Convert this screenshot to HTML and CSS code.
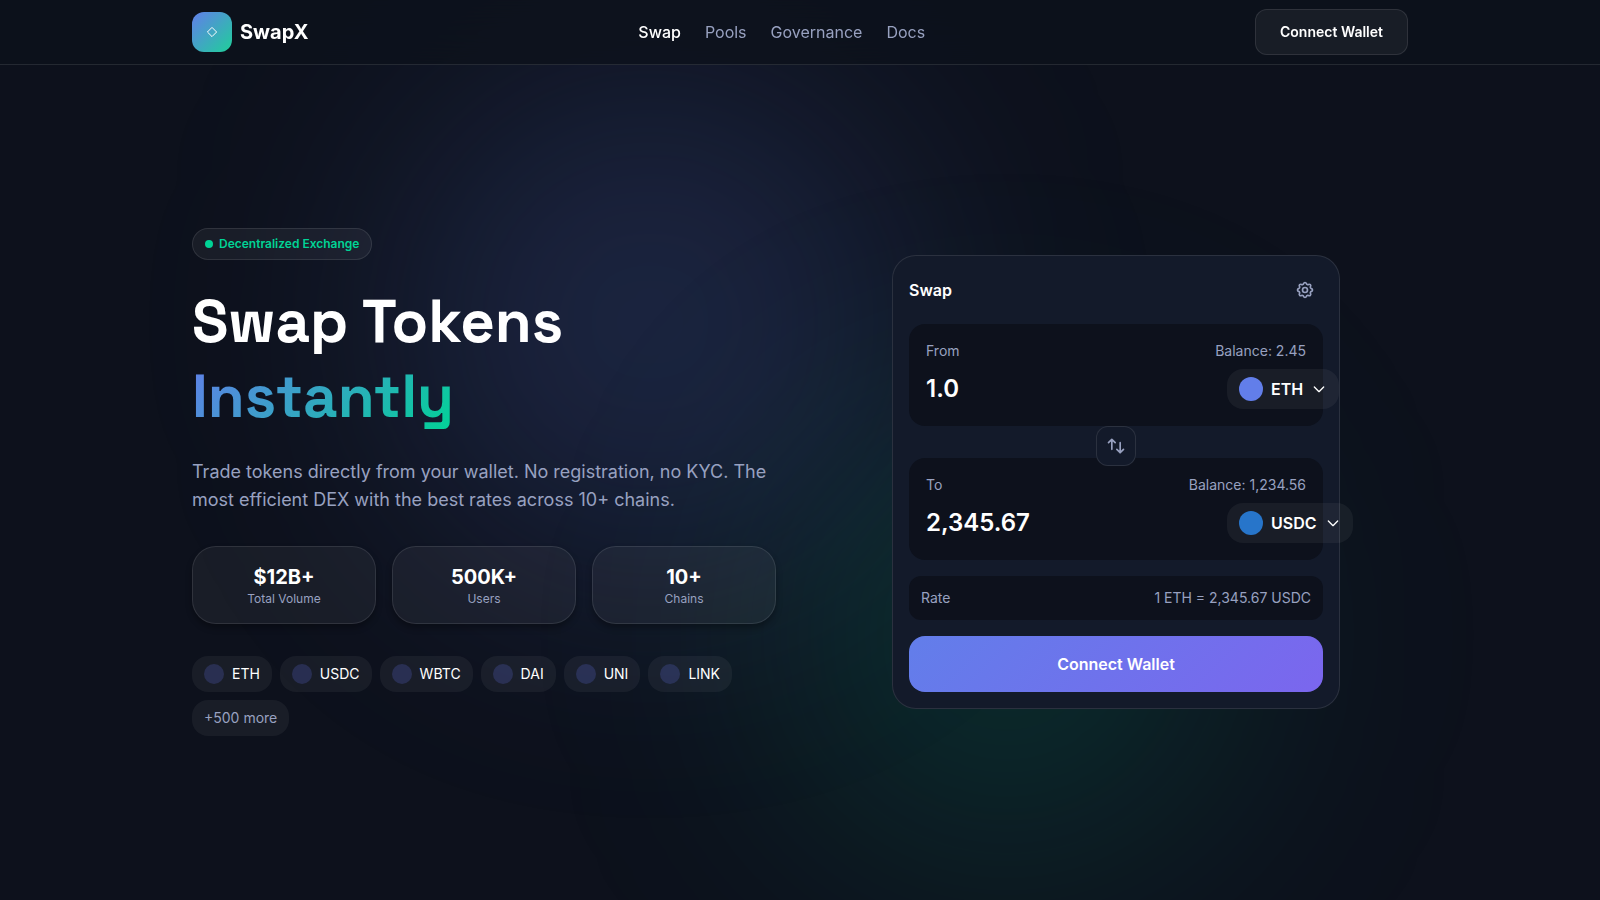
FILE: index.html
```html
<!DOCTYPE html>
<html lang="en">
<head>
<meta charset="utf-8">
<meta name="viewport" content="width=device-width, initial-scale=1">
<title>SwapX</title>
<link rel="stylesheet" href="styles.css">
</head>
<body>
<div class="glow glow-indigo"></div>
<div class="glow glow-green"></div>
<header class="header">
  <div class="container header-row">
    <div class="brand">
      <span class="logo"><svg width="12" height="12" viewBox="0 0 12 12" fill="none" stroke="currentColor" stroke-width="1"><path d="M6 1.4 10.6 6 6 10.6 1.4 6Z"/></svg></span>
      <span class="brand-name">SwapX</span>
    </div>
    <nav class="nav">
      <a class="active" href="#swap">Swap</a>
      <a href="#pools">Pools</a>
      <a href="#governance">Governance</a>
      <a href="#docs">Docs</a>
    </nav>
    <button class="btn-outline" type="button">Connect Wallet</button>
  </div>
</header>
<main class="hero">
  <div class="container hero-grid">
    <section class="intro">
      <div class="badge"><span class="badge-dot"></span>Decentralized Exchange</div>
      <h1 class="title">Swap Tokens<br><span class="title-accent">Instantly</span></h1>
      <p class="lead">Trade tokens directly from your wallet. No registration, no KYC. The most efficient DEX with the best rates across 10+ chains.</p>
      <div class="stats">
        <div class="stat"><div class="stat-value">$12B+</div><div class="stat-label">Total Volume</div></div>
        <div class="stat"><div class="stat-value">500K+</div><div class="stat-label">Users</div></div>
        <div class="stat"><div class="stat-value">10+</div><div class="stat-label">Chains</div></div>
      </div>
      <div class="chips">
        <span class="chip"><i class="coin"></i>ETH</span>
        <span class="chip"><i class="coin"></i>USDC</span>
        <span class="chip"><i class="coin"></i>WBTC</span>
        <span class="chip"><i class="coin"></i>DAI</span>
        <span class="chip"><i class="coin"></i>UNI</span>
        <span class="chip"><i class="coin"></i>LINK</span>
        <span class="chip chip-more">+500 more</span>
      </div>
    </section>
    <section class="swap-card" id="swap">
      <div class="swap-head">
        <h2 class="swap-title">Swap</h2>
        <button class="icon-btn" type="button" aria-label="Settings">
          <svg width="20" height="20" viewBox="0 0 24 24" fill="none" stroke="currentColor" stroke-width="2" stroke-linecap="round" stroke-linejoin="round"><path d="M10.325 4.317c.426-1.756 2.924-1.756 3.35 0a1.724 1.724 0 0 0 2.573 1.066c1.543-.94 3.31.826 2.37 2.37a1.724 1.724 0 0 0 1.065 2.572c1.756.426 1.756 2.924 0 3.35a1.724 1.724 0 0 0-1.066 2.573c.94 1.543-.826 3.31-2.37 2.37a1.724 1.724 0 0 0-2.572 1.065c-.426 1.756-2.924 1.756-3.35 0a1.724 1.724 0 0 0-2.573-1.066c-1.543.94-3.31-.826-2.37-2.37a1.724 1.724 0 0 0-1.065-2.572c-1.756-.426-1.756-2.924 0-3.35a1.724 1.724 0 0 0 1.066-2.573c-.94-1.543.826-3.31 2.37-2.37.996.608 2.296.07 2.572-1.065z"/><circle cx="12" cy="12" r="3"/></svg>
        </button>
      </div>
      <div class="token-box">
        <div class="token-meta"><label for="from">From</label><span>Balance: 2.45</span></div>
        <div class="token-row">
          <input class="amount" id="from" type="text" value="1.0">
          <button class="token-btn" type="button"><i class="token-icon token-eth"></i>ETH<svg width="16" height="16" viewBox="0 0 24 24" fill="none" stroke="currentColor" stroke-width="2" stroke-linecap="round" stroke-linejoin="round"><path d="m19 9-7 7-7-7"/></svg></button>
        </div>
      </div>
      <div class="flip">
        <button class="flip-btn" type="button" aria-label="Switch tokens">
          <svg width="20" height="20" viewBox="0 0 24 24" fill="none" stroke="currentColor" stroke-width="2" stroke-linecap="round" stroke-linejoin="round"><path d="M7 16V4m0 0L3 8m4-4 4 4m6 0v12m0 0 4-4m-4 4-4-4"/></svg>
        </button>
      </div>
      <div class="token-box">
        <div class="token-meta"><label for="to">To</label><span>Balance: 1,234.56</span></div>
        <div class="token-row">
          <input class="amount" id="to" type="text" value="2,345.67">
          <button class="token-btn" type="button"><i class="token-icon token-usdc"></i>USDC<svg width="16" height="16" viewBox="0 0 24 24" fill="none" stroke="currentColor" stroke-width="2" stroke-linecap="round" stroke-linejoin="round"><path d="m19 9-7 7-7-7"/></svg></button>
        </div>
      </div>
      <div class="rate"><span>Rate</span><span>1 ETH = 2,345.67 USDC</span></div>
      <button class="btn-primary" type="button">Connect Wallet</button>
    </section>
  </div>
</main>
</body>
</html>
```
FILE: styles.css
```css
:root {
  --bg: #0d111c;
  --surface: #131a2a;
  --overlay: rgba(255, 255, 255, 0.05);
  --line: rgba(255, 255, 255, 0.1);
  --muted: #98a1c0;
  --indigo: #627eea;
  --green: #00d395;
}

* { box-sizing: border-box; }

body {
  margin: 0;
  min-height: 100vh;
  display: flex;
  flex-direction: column;
  position: relative;
  overflow: hidden;
  background: var(--bg);
  color: #fff;
  font: 16px/24px Inter, "Liberation Sans", sans-serif;
}

button, input { font-family: inherit; }
button { cursor: pointer; }
a { color: inherit; text-decoration: none; }
svg { display: block; }

.glow {
  position: absolute;
  border-radius: 50%;
  filter: blur(128px);
}
.glow-indigo {
  top: 72px;
  left: 25%;
  width: 500px;
  height: 500px;
  background: rgba(98, 126, 234, 0.19);
}
.glow-green {
  bottom: 40px;
  right: 23%;
  width: 450px;
  height: 450px;
  background: rgba(0, 211, 149, 0.15);
}

.container {
  width: 100%;
  max-width: 1280px;
  margin: 0 auto;
  padding: 0 32px;
}

.header {
  position: relative;
  background: rgba(13, 17, 28, 0.8);
  backdrop-filter: blur(20px);
  border-bottom: 1px solid var(--line);
}
.header-row {
  height: 64px;
  display: flex;
  align-items: center;
  justify-content: space-between;
}
.brand { display: flex; align-items: center; gap: 8px; }
.logo {
  width: 40px;
  height: 40px;
  border-radius: 12px;
  display: grid;
  place-items: center;
  background: linear-gradient(135deg, var(--indigo), #1fcf9a);
}
.brand-name { font-size: 20px; line-height: 28px; font-weight: 700; }
.nav { display: flex; gap: 24px; color: var(--muted); }
.nav .active { color: #fff; font-weight: 500; }
.btn-outline {
  padding: 12px 24px;
  border: 1px solid var(--line);
  border-radius: 12px;
  background: var(--overlay);
  color: #fff;
  font-size: 14px;
  line-height: 20px;
  font-weight: 600;
}

.hero {
  position: relative;
  flex: 1;
  display: flex;
  align-items: center;
  padding-bottom: 1px;
}
.hero-grid {
  display: grid;
  grid-template-columns: 1fr 1fr;
  align-items: center;
  gap: 48px;
}

.badge {
  display: inline-flex;
  align-items: center;
  gap: 6px;
  height: 32px;
  padding: 0 12px;
  border: 1px solid var(--line);
  border-radius: 16px;
  background: var(--overlay);
  color: var(--green);
  font-size: 12px;
  font-weight: 600;
  vertical-align: top;
}
.badge-dot { width: 8px; height: 8px; border-radius: 50%; background: currentColor; }
.title {
  margin: 24px 0;
  font-family: "Space Grotesk", Inter, sans-serif;
  font-size: 60px;
  line-height: 75px;
  font-weight: 700;
}
.title-accent {
  background: linear-gradient(135deg, var(--indigo), var(--green));
  background-clip: text;
  -webkit-background-clip: text;
  color: transparent;
}
.lead {
  margin: 0 0 32px;
  color: var(--muted);
  font-size: 18px;
  line-height: 28px;
}
.stats {
  display: grid;
  grid-template-columns: repeat(3, 1fr);
  gap: 16px;
  margin-bottom: 32px;
}
.stat {
  padding: 16px;
  border: 1px solid var(--line);
  border-radius: 24px;
  background: var(--overlay);
  box-shadow: 0 4px 6px rgba(0, 0, 0, 0.3);
  text-align: center;
}
.stat-value { font-size: 20px; line-height: 28px; font-weight: 700; }
.stat-label { font-size: 12px; line-height: 16px; color: var(--muted); }
.chips { display: flex; flex-wrap: wrap; gap: 8px; }
.chip {
  display: flex;
  align-items: center;
  gap: 8px;
  padding: 8px 12px;
  border-radius: 16px;
  background: var(--overlay);
  font-size: 14px;
  line-height: 20px;
}
.chip-more { color: var(--muted); }
.coin { width: 20px; height: 20px; border-radius: 50%; background: rgba(98, 115, 234, 0.22); }

.swap-card {
  width: 100%;
  max-width: 448px;
  justify-self: center;
  padding: 16px;
  border: 1px solid var(--line);
  border-radius: 24px;
  background: var(--surface);
}
.swap-head {
  display: flex;
  align-items: center;
  justify-content: space-between;
  margin-bottom: 16px;
}
.swap-title { margin: 0; font-size: 16px; line-height: 24px; font-weight: 600; }
.icon-btn {
  padding: 8px;
  border: 0;
  border-radius: 12px;
  background: none;
  color: var(--muted);
}
.token-box {
  padding: 16px;
  border: 1px solid transparent;
  border-radius: 16px;
  background: var(--bg);
}
.token-meta {
  display: flex;
  justify-content: space-between;
  margin-bottom: 8px;
  color: var(--muted);
  font-size: 14px;
  line-height: 20px;
}
.token-row { display: flex; align-items: center; gap: 12px; }
.amount {
  flex: none;
  width: 289px;
  padding: 0;
  border: 0;
  outline: 0;
  background: none;
  color: #fff;
  font-size: 24px;
  line-height: 32px;
  font-weight: 600;
}
.token-btn {
  flex: none;
  display: flex;
  align-items: center;
  gap: 8px;
  padding: 8px 12px;
  border: 0;
  border-radius: 16px;
  background: var(--overlay);
  color: #fff;
  font-size: 16px;
  line-height: 24px;
  font-weight: 600;
}
.token-icon { width: 24px; height: 24px; border-radius: 50%; }
.token-eth { background: #627eea; }
.token-usdc { background: #2775ca; }
.flip {
  position: relative;
  display: flex;
  justify-content: center;
  margin-bottom: -8px;
}
.flip-btn {
  width: 40px;
  height: 40px;
  display: grid;
  place-items: center;
  padding: 0;
  border: 1px solid var(--line);
  border-radius: 12px;
  background: var(--surface);
  color: var(--muted);
}
.rate {
  display: flex;
  justify-content: space-between;
  margin: 16px 0;
  padding: 12px;
  border-radius: 12px;
  background: var(--bg);
  color: var(--muted);
  font-size: 14px;
  line-height: 20px;
}
.btn-primary {
  width: 100%;
  height: 56px;
  border: 0;
  border-radius: 16px;
  background: linear-gradient(135deg, #627eea, #7b66ee);
  color: #fff;
  font-size: 16px;
  font-weight: 600;
}
```
